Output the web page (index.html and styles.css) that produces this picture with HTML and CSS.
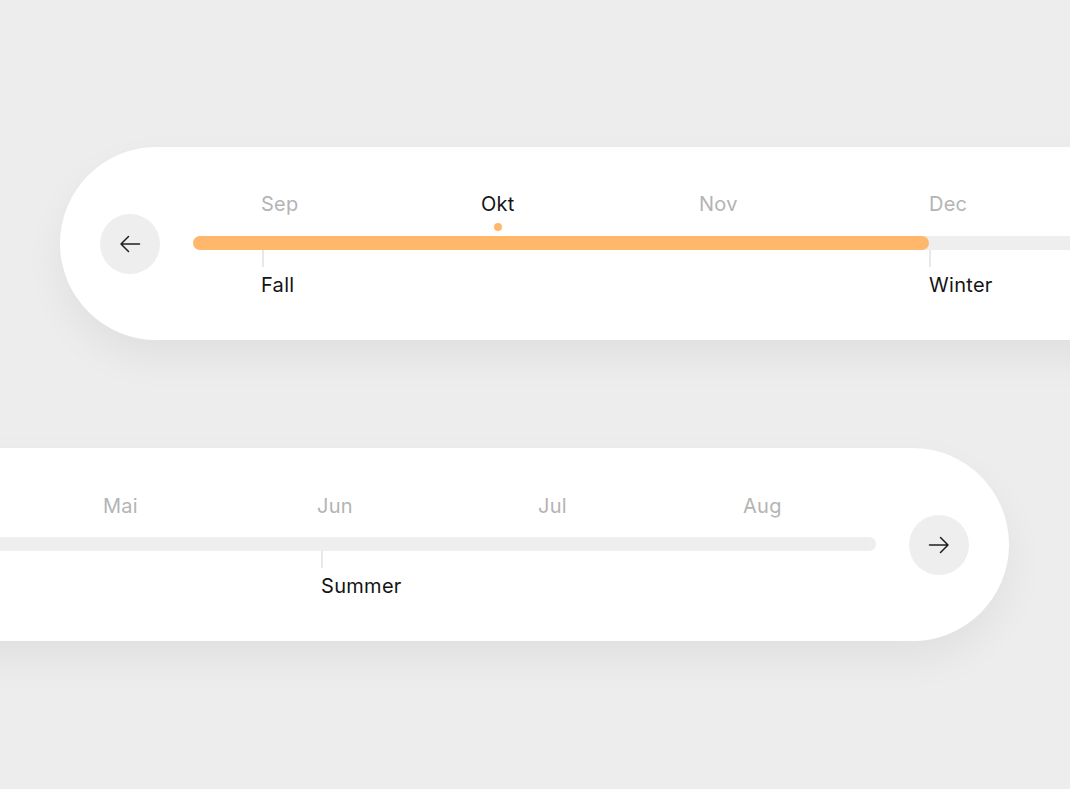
FILE: index.html
```html
<!DOCTYPE html>
<html lang="en">
<head>
<meta charset="utf-8">
<title>Seasons timeline</title>
<link rel="stylesheet" href="styles.css">
</head>
<body>
<div class="stage">
  <section class="card card-top">
    <button class="nav-btn" aria-label="Previous">
      <svg width="24" height="24" viewBox="0 0 24 24" fill="none" stroke="#1f1f1f" stroke-width="1.5" stroke-linecap="round" stroke-linejoin="round"><path d="M21.5 12H3M10.5 4.5L3 12L10.5 19.5"/></svg>
    </button>
    <div class="timeline tl-top">
      <div class="months">
        <div class="month w-sep">Sep</div>
        <div class="month w-okt active"><span>Okt</span><i class="dot"></i></div>
        <div class="month w-nov">Nov</div>
        <div class="month">Dec</div>
      </div>
      <div class="track"><div class="fill"></div></div>
      <div class="seasons">
        <div class="season w-fall"><i class="tick"></i><span>Fall</span></div>
        <div class="season"><i class="tick"></i><span>Winter</span></div>
      </div>
    </div>
  </section>

  <section class="card card-bottom">
    <div class="timeline tl-bottom">
      <div class="months">
        <div class="month w-mai">Mai</div>
        <div class="month w-jun">Jun</div>
        <div class="month w-jul">Jul</div>
        <div class="month">Aug</div>
      </div>
      <div class="track"></div>
      <div class="seasons">
        <div class="season"><i class="tick"></i><span>Summer</span></div>
      </div>
    </div>
    <button class="nav-btn" aria-label="Next">
      <svg width="24" height="24" viewBox="0 0 24 24" fill="none" stroke="#1f1f1f" stroke-width="1.5" stroke-linecap="round" stroke-linejoin="round"><path d="M2.5 12H21M13.5 4.5L21 12L13.5 19.5"/></svg>
    </button>
  </section>
</div>
</body>
</html>
```

FILE: styles.css
```css
html, body {
  margin: 0;
  padding: 0;
  background: #ededed;
  overflow: hidden;
  width: 1070px;
  height: 789px;
}
body {
  font-family: Inter, "Noto Sans", "Liberation Sans", sans-serif;
}
.stage {
  display: flex;
  flex-direction: column;
  gap: 108px;
  padding-top: 147px;
}
.card {
  height: 193px;
  background: #ffffff;
  display: flex;
  align-items: flex-start;
  box-sizing: border-box;
  box-shadow: 0 18px 40px rgba(0, 0, 0, 0.055);
  flex: none;
}
.card-top {
  margin-left: 60px;
  width: 1250px;
  border-radius: 96.5px 0 0 96.5px;
  padding-left: 40px;
  gap: 33px;
}
.card-bottom {
  margin-left: -200px;
  width: 1209px;
  border-radius: 0 96.5px 96.5px 0;
  padding-right: 40px;
  gap: 33px;
}
.nav-btn {
  flex: none;
  width: 60px;
  height: 60px;
  border-radius: 50%;
  border: 0;
  padding: 0;
  background: #eeeeee;
  display: flex;
  align-items: center;
  justify-content: center;
  align-self: center;
  margin-top: 1px;
}
.timeline {
  flex: 1;
  padding-top: 45px;
  display: flex;
  flex-direction: column;
}
.tl-bottom { padding-top: 46px; }
.months {
  display: flex;
  height: 44px;
  align-items: flex-start;
}
.tl-bottom .months { height: 43px; }
.month {
  font-size: 20px;
  line-height: 24px;
  letter-spacing: 0.25px;
  color: #b4b4b4;
  flex: none;
  display: flex;
  flex-direction: column;
  align-items: flex-start;
}
.month.active {
  color: #141414;
}
.dot {
  width: 8px;
  height: 8px;
  border-radius: 50%;
  background: #ffb86b;
  margin-top: 7px;
  margin-left: 13px;
}
.tl-top .months { padding-left: 68px; }
.w-sep { width: 220px; }
.w-okt { width: 218px; }
.w-nov { width: 230px; }

.tl-bottom .months { padding-left: 303px; }
.w-mai { width: 214px; }
.w-jun { width: 221px; }
.w-jul { width: 205px; }

.track {
  height: 14px;
  border-radius: 7px;
  background: #eeeeee;
  display: flex;
}
.fill {
  width: 736px;
  height: 14px;
  border-radius: 7px;
  background: #ffb86b;
}
.seasons {
  display: flex;
}
.tl-top .seasons { padding-left: 68px; }
.tl-bottom .seasons { padding-left: 521px; }
.season {
  flex: none;
  display: flex;
  flex-direction: column;
  align-items: flex-start;
  font-size: 20px;
  line-height: 24px;
  letter-spacing: 0.3px;
  color: #141414;
}
.w-fall { width: 668px; }
.tick {
  width: 2px;
  height: 17px;
  background: #e8e8e8;
  margin-bottom: 6px;
}
.tl-top .w-fall .tick { margin-left: 1px; }
```
